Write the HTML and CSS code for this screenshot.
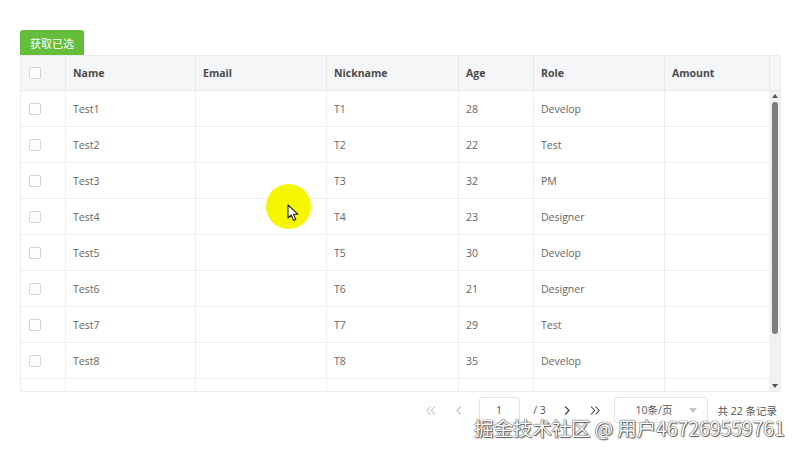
FILE: index.html
```html
<!DOCTYPE html>
<html lang="zh">
<head>
  <meta charset="UTF-8">
  <title>Table</title>
  <link rel="stylesheet" href="styles.css">
</head>
<body>
  <div class="page">
    <button class="btn-get">获取已选</button>

    <div class="grid">
      <div class="grid-head">
        <div class="row head">
          <div class="cell chk"><span class="box"></span></div>
          <div class="cell">Name</div>
          <div class="cell">Email</div>
          <div class="cell">Nickname</div>
          <div class="cell">Age</div>
          <div class="cell">Role</div>
          <div class="cell">Amount</div>
        </div>
        <div class="gutter-head"></div>
      </div>

      <div class="grid-body">
        <div class="rows" id="rows"></div>
        <div class="scrollbar">
          <span class="arrow up"></span>
          <span class="thumb"></span>
          <span class="arrow down"></span>
        </div>
      </div>
    </div>

    <div class="pager">
      <span class="pg-btn first">
        <svg width="10" height="9" viewBox="0 0 10 9"><path d="M4.5 0.5 L0.8 4.5 L4.5 8.5 M9 0.5 L5.3 4.5 L9 8.5" fill="none" stroke="#c2c2c2" stroke-width="1.1"/></svg>
      </span>
      <span class="pg-btn prev">
        <svg width="6" height="9" viewBox="0 0 6 9"><path d="M4.8 0.5 L1 4.5 L4.8 8.5" fill="none" stroke="#c2c2c2" stroke-width="1.1"/></svg>
      </span>
      <span class="pg-input">1</span>
      <span class="pg-total">/ 3</span>
      <span class="pg-btn next">
        <svg width="6" height="9" viewBox="0 0 6 9"><path d="M1.2 0.5 L5 4.5 L1.2 8.5" fill="none" stroke="#444" stroke-width="1.2"/></svg>
      </span>
      <span class="pg-btn last">
        <svg width="10" height="9" viewBox="0 0 10 9"><path d="M1 0.5 L4.7 4.5 L1 8.5 M5.5 0.5 L9.2 4.5 L5.5 8.5" fill="none" stroke="#444" stroke-width="1.1"/></svg>
      </span>
      <span class="pg-size">10条/页 <i class="caret"></i></span>
      <span class="pg-count">共 22 条记录</span>
    </div>

    <div class="watermark">掘金技术社区 @ 用户467269559761</div>

    <div class="pointer">
      <svg width="14" height="18" viewBox="0 0 14 18">
        <path d="M1 1 L1 14 L4.2 11 L6.6 16.5 L8.8 15.5 L6.4 10.2 L10.8 10.2 Z" fill="#fff" stroke="#222" stroke-width="1.1" stroke-linejoin="round"/>
      </svg>
    </div>
  </div>

  <script>
    const data = [
      ["Test1", "T1", 28, "Develop"],
      ["Test2", "T2", 22, "Test"],
      ["Test3", "T3", 32, "PM"],
      ["Test4", "T4", 23, "Designer"],
      ["Test5", "T5", 30, "Develop"],
      ["Test6", "T6", 21, "Designer"],
      ["Test7", "T7", 29, "Test"],
      ["Test8", "T8", 35, "Develop"],
      ["", "", "", ""]
    ];
    const rows = document.getElementById("rows");
    data.forEach(d => {
      const r = document.createElement("div");
      r.className = "row";
      r.innerHTML =
        '<div class="cell chk"><span class="box"></span></div>' +
        '<div class="cell">' + d[0] + '</div>' +
        '<div class="cell"></div>' +
        '<div class="cell">' + d[1] + '</div>' +
        '<div class="cell">' + d[2] + '</div>' +
        '<div class="cell">' + d[3] + '</div>' +
        '<div class="cell"></div>';
      rows.appendChild(r);
    });
  </script>
</body>
</html>
```

FILE: styles.css
```css
* { box-sizing: border-box; }

html, body {
  margin: 0;
  padding: 0;
  background: #fff;
  font-family: "Open Sans", "Noto Sans CJK SC", sans-serif;
  overflow: hidden;
}

.page {
  position: relative;
  width: 800px;
  height: 451px;
  padding: 30px 19px 0 20px;
}

.btn-get {
  display: block;
  width: 64px;
  height: 25px;
  border: none;
  border-radius: 3px 3px 0 0;
  background: #64bd3b;
  color: #fff;
  font-family: "Noto Sans CJK SC", sans-serif;
  font-size: 11px;
  padding: 0;
}

.grid {
  border: 1px solid #ebebeb;
  border-radius: 0 2px 2px 2px;
}

.grid-head {
  display: flex;
  background: #f5f6f7;
  border-bottom: 1px solid #e8e8e8;
}

.gutter-head {
  width: 11px;
  border-left: 1px solid #e8e8e8;
}

.row {
  display: grid;
  grid-template-columns: 45px 130px 131px 132px 75px 131px 104px;
  height: 36px;
  border-bottom: 1px solid #eeeeee;
}

.row.head {
  height: 34px;
  border-bottom: none;
  font-weight: 700;
}

.cell {
  display: flex;
  align-items: center;
  padding-left: 7px;
  font-size: 10.5px;
  color: #666;
  border-right: 1px solid #eeeeee;
  white-space: nowrap;
}

.cell.chk {
  padding-left: 8px;
}

.row.head .cell {
  color: #4a4a4a;
  border-right-color: #e8e8e8;
}

.row .cell:last-child {
  border-right: none;
}

.box {
  width: 12px;
  height: 12px;
  border: 1px solid #d4d4d4;
  border-radius: 2px;
  background: #fff;
}

.grid-body {
  display: flex;
  height: 300px;
}

.rows {
  width: 748px;
  overflow: hidden;
}

.scrollbar {
  width: 11px;
  background: #f1f1f1;
  display: flex;
  flex-direction: column;
  align-items: center;
  padding: 3px 0;
  border-left: 1px solid #f4f4f4;
}

.arrow {
  width: 0;
  height: 0;
  border-left: 3.5px solid transparent;
  border-right: 3.5px solid transparent;
}

.arrow.up {
  border-bottom: 4px solid #555;
}

.arrow.down {
  border-top: 4px solid #555;
  margin-top: auto;
}

.thumb {
  width: 6px;
  height: 232px;
  margin-top: 4px;
  border-radius: 3px;
  background: #7d7d7d;
}

.pager {
  display: flex;
  justify-content: flex-end;
  align-items: center;
  height: 26px;
  margin-top: 5px;
  margin-right: 4px;
  font-size: 10.5px;
  color: #555;
}

.pg-btn {
  display: flex;
  justify-content: center;
  align-items: center;
  width: 28px;
  height: 26px;
}

.pg-btn.first { width: 27px; }

.pg-btn.prev { margin-right: 6px; }

.pg-input {
  width: 41px;
  height: 26px;
  border: 1px solid #e3e3e3;
  border-radius: 3px;
  text-align: center;
  line-height: 24px;
  color: #555;
}

.pg-total {
  width: 33px;
  padding-left: 7px;
  text-align: center;
}

.pg-size {
  position: relative;
  width: 94px;
  height: 26px;
  margin-left: 5px;
  border: 1px solid #e3e3e3;
  border-radius: 3px;
  padding-left: 21px;
  line-height: 24px;
  color: #555;
}

.caret {
  position: absolute;
  right: 10px;
  top: 10px;
  border-left: 4px solid transparent;
  border-right: 4px solid transparent;
  border-top: 5px solid #c4c4c4;
}

.pg-count {
  margin-left: 10px;
  color: #555;
}

.watermark {
  position: absolute;
  left: 474px;
  top: 413px;
  font-family: "Noto Sans CJK SC", sans-serif;
  font-size: 19.5px;
  color: #fff;
  letter-spacing: -0.1px;
  text-shadow: 0 0 1px #333, 0 0 1px #333, 1px 1px 1px #666;
  white-space: nowrap;
}

.pointer {
  position: absolute;
  left: 266px;
  top: 184px;
  width: 45px;
  height: 45px;
  border-radius: 50%;
  background: #f6f600;
}

.pointer svg {
  position: absolute;
  left: 21px;
  top: 20px;
}
```
